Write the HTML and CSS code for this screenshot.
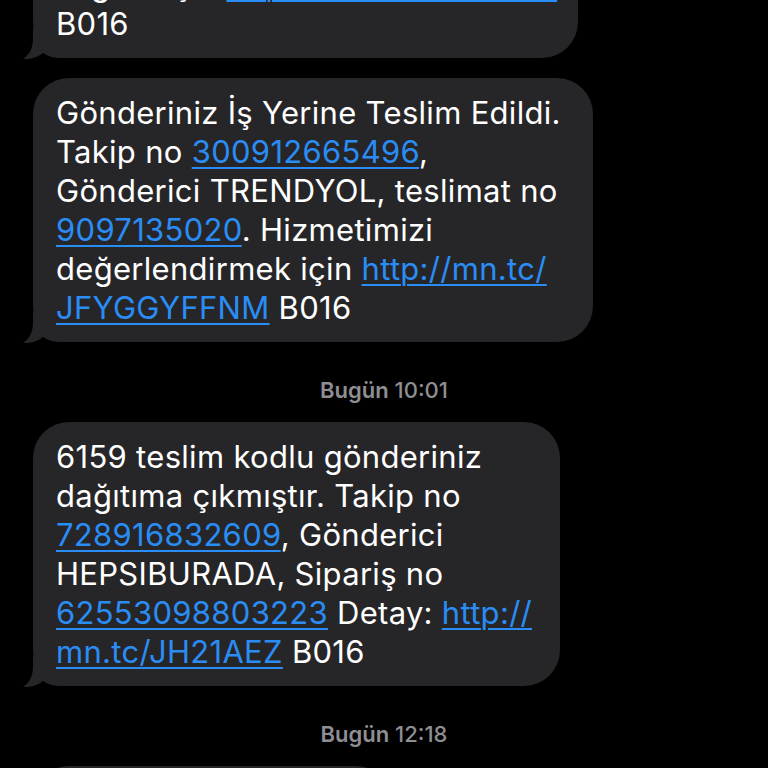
FILE: index.html
```html
<!DOCTYPE html>
<html lang="tr">
<head>
<meta charset="utf-8">
<title>Mesajlar</title>
<link rel="stylesheet" href="styles.css">
</head>
<body>
<main class="thread">
  <div class="bubble b1">
    <svg class="tail" viewBox="0 0 50 32" width="50" height="32"><path d="M13 0 L13 10 C13 21 9 27 3 31 C9 31.5 17 30 23 25 C29 29 34 30 42 30 L50 30 L50 0 Z"/></svg>
    <p class="msg">Gönderici TRENDYOL, teslimat no<br>bilgiler için <a class="lnk">http://mn.tc/KDY8TZC</a><br>B016</p>
  </div>

  <div class="bubble b2">
    <svg class="tail" viewBox="0 0 50 32" width="50" height="32"><path d="M13 0 L13 10 C13 21 9 27 3 31 C9 31.5 17 30 23 25 C29 29 34 30 42 30 L50 30 L50 0 Z"/></svg>
    <p class="msg">Gönderiniz İş Yerine Teslim Edildi.<br>Takip no <a class="lnk">300912665496</a>,<br>Gönderici TRENDYOL, teslimat no<br><a class="lnk">9097135020</a>. Hizmetimizi<br>değerlendirmek için <a class="lnk">http://mn.tc/</a><br><a class="lnk">JFYGGYFFNM</a> B016</p>
  </div>

  <div class="stamp"><span class="day">Bugün</span> 10:01</div>

  <div class="bubble b3">
    <svg class="tail" viewBox="0 0 50 32" width="50" height="32"><path d="M13 0 L13 10 C13 21 9 27 3 31 C9 31.5 17 30 23 25 C29 29 34 30 42 30 L50 30 L50 0 Z"/></svg>
    <p class="msg">6159 teslim kodlu gönderiniz<br>dağıtıma çıkmıştır. Takip no<br><a class="lnk">728916832609</a>, Gönderici<br>HEPSIBURADA, Sipariş no<br><a class="lnk">62553098803223</a> Detay: <a class="lnk">http://</a><br><a class="lnk">mn.tc/JH21AEZ</a> B016</p>
  </div>

  <div class="stamp"><span class="day">Bugün</span> 12:18</div>

  <div class="bubble b4">
    <p class="msg">Gönderiniz teslim edildi.</p>
  </div>
</main>
</body>
</html>
```
FILE: styles.css
```css
html, body {
  margin: 0;
  padding: 0;
  background: #000;
  height: 100%;
  overflow: hidden;
}

.thread {
  display: flex;
  flex-direction: column;
  align-items: flex-start;
  padding-left: 33px;
  font-family: Inter, "Noto Sans", sans-serif;
}

.bubble {
  position: relative;
  background: #262628;
  border-radius: 36px;
  padding: 15px 20px 15px 23px;
  box-sizing: border-box;
}

.msg {
  position: relative;
  z-index: 1;
  margin: 0;
  color: #fff;
  font-size: 31px;
  line-height: 39px;
  white-space: nowrap;
  letter-spacing: 0.3px;
}

.lnk {
  color: #2a8df5;
  text-decoration: underline;
  text-decoration-thickness: 2px;
  text-underline-offset: 4px;
}

.tail {
  position: absolute;
  left: -13px;
  bottom: -2px;
  fill: #262628;
}

.b1 {
  width: 545px;
  margin-top: -89px;
}

.b2 {
  width: 560px;
  margin-top: 20px;
}

.b3 {
  width: 527px;
}

.b4 {
  width: 359px;
  height: 120px;
}

.stamp {
  align-self: center;
  margin-left: -33px;
  color: #8e8e93;
  font-size: 22px;
  font-weight: 500;
  line-height: 26px;
  padding: 35px 0 19px;
}

.day {
  font-weight: 600;
}
```
